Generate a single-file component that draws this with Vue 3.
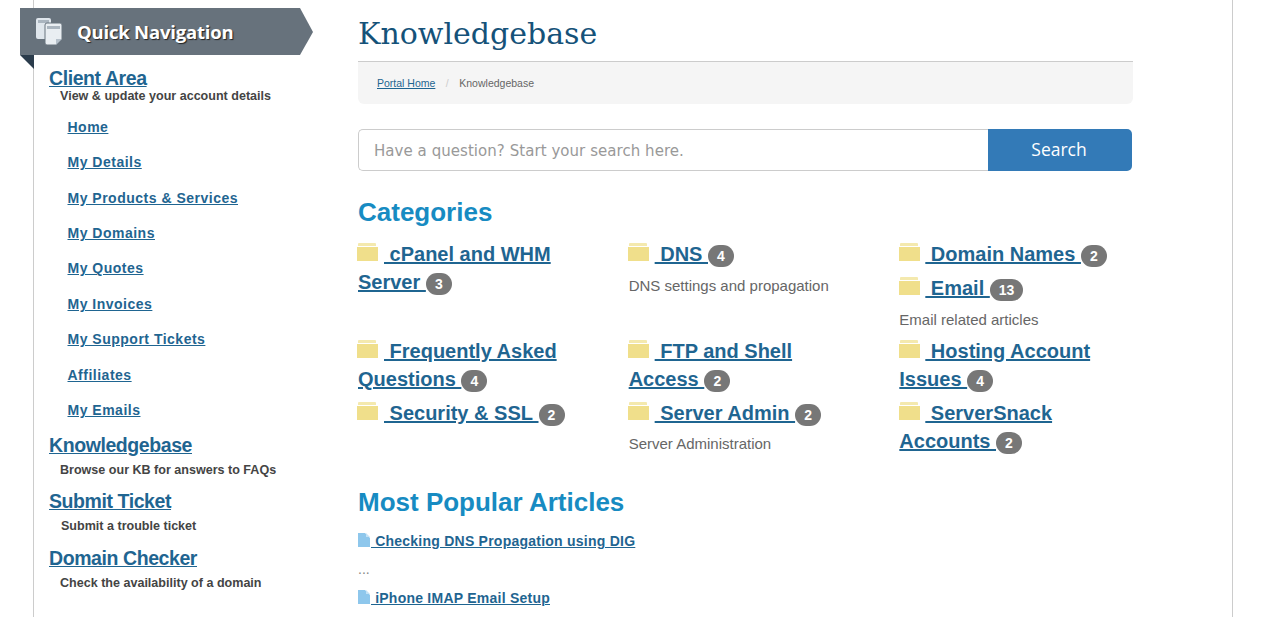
<script setup>
const nav = ['Home','My Details','My Products & Services','My Domains','My Quotes','My Invoices','My Support Tickets','Affiliates','My Emails']
const rows = [
  [
    [{ t: 'cPanel and WHM Server', n: 3 }],
    [{ t: 'DNS', n: 4, d: 'DNS settings and propagation' }],
    [{ t: 'Domain Names', n: 2 }, { t: 'Email', n: 13, d: 'Email related articles' }]
  ],
  [
    [{ t: 'Frequently Asked Questions', n: 4 }],
    [{ t: 'FTP and Shell Access', n: 2 }],
    [{ t: 'Hosting Account Issues', n: 4 }]
  ],
  [
    [{ t: 'Security & SSL', n: 2 }],
    [{ t: 'Server Admin', n: 2, d: 'Server Administration' }],
    [{ t: 'ServerSnack Accounts', n: 2 }]
  ]
]
</script>

<template>
  <div class="page">
    <div class="shell">
      <aside class="side">
        <div class="ribbon">
          <svg class="ribbon-icon" viewBox="0 0 28 29" width="28" height="29">
            <rect x="1" y="1" width="15" height="21" rx="2" fill="#dfe6ec"/>
            <rect x="3" y="3" width="11" height="3" fill="#aab5bf"/>
            <path d="M12 6h13a2 2 0 0 1 2 2v14l-6 6h-9a2 2 0 0 1-2-2V8a2 2 0 0 1 2-2z" fill="#e9eef2" stroke="#69747e" stroke-width="1"/>
            <path d="M21 28v-6h6z" fill="#b5c0ca"/>
            <rect x="12" y="9" width="13" height="3" fill="#aab5bf"/>
          </svg>
          <span class="ribbon-text">Quick Navigation</span>
        </div>
        <div class="nav">
          <a class="major first">Client Area</a>
          <p class="sub sub-first">View &amp; update your account details</p>
          <ul class="list">
            <li v-for="n in nav" :key="n"><a class="minor">{{ n }}</a></li>
          </ul>
          <a class="major">Knowledgebase</a>
          <p class="sub">Browse our KB for answers to FAQs</p>
          <a class="major">Submit Ticket</a>
          <p class="sub sub-alt">Submit a trouble ticket</p>
          <a class="major">Domain Checker</a>
          <p class="sub">Check the availability of a domain</p>
        </div>
      </aside>
      <main class="main">
        <h1 class="title">Knowledgebase</h1>
        <div class="crumbs">
          <a class="crumb-link">Portal Home</a>
          <span class="crumb-sep">/</span>
          <span class="crumb-cur">Knowledgebase</span>
        </div>
        <div class="search">
          <input class="search-input" placeholder="Have a question? Start your search here." />
          <button class="search-btn">Search</button>
        </div>
        <h2 class="heading">Categories</h2>
        <div v-for="(row, i) in rows" :key="i" class="row" :class="'row-' + i">
          <div v-for="(col, j) in row" :key="j" class="col">
            <div v-for="item in col" :key="item.t" class="item">
              <div class="item-title">
                <a class="cat-link"><svg class="folder" viewBox="0 0 21 18" width="21" height="18"><path d="M2 0h16a1 1 0 0 1 1 1v2H1V1a1 1 0 0 1 1-1z" fill="#f0df8b" opacity=".7"/><rect y="4" width="21" height="14" fill="#f0df8b"/></svg>&nbsp;{{ item.t }}&nbsp;</a><span class="badge">{{ item.n }}</span>
              </div>
              <p v-if="item.d" class="desc">{{ item.d }}</p>
            </div>
          </div>
        </div>
        <h2 class="heading popular">Most Popular Articles</h2>
        <div class="article article-first">
          <a class="art-link"><svg class="doc" viewBox="0 0 12 14" width="12" height="14"><path d="M0 0h7l5 5v9H0z" fill="#8ec7ec"/><path d="M8 0l4 4H8z" fill="#c4e2f5"/></svg>&nbsp;Checking DNS Propagation using DIG</a>
        </div>
        <p class="dots">...</p>
        <div class="article">
          <a class="art-link"><svg class="doc" viewBox="0 0 12 14" width="12" height="14"><path d="M0 0h7l5 5v9H0z" fill="#8ec7ec"/><path d="M8 0l4 4H8z" fill="#c4e2f5"/></svg>&nbsp;iPhone IMAP Email Setup</a>
        </div>
      </main>
    </div>
  </div>
</template>

<style>
html, body { margin: 0; background: #fff; overflow: hidden; }
</style>

<style scoped>
.page { height: 617px; overflow: hidden; background: #fff; font-family: "Liberation Sans", Arial, sans-serif; }
.shell {
  box-sizing: border-box; width: 1200px; height: 617px; margin-left: 33px;
  border-left: 1px solid #ccc; border-right: 1px solid #ccc;
  display: flex;
}
.side { position: relative; width: 324px; flex: none; padding-top: 8px; box-sizing: border-box; }
.ribbon {
  position: relative; margin-left: -14px; width: 293px; height: 47px;
  background: #67727c;
  clip-path: polygon(0 0, 280px 0, 293px 24px, 280px 47px, 0 47px);
  display: flex; align-items: center;
}
.side::before {
  content: ""; position: absolute; left: -14px; top: 55px;
  border-style: solid; border-width: 0 14px 14px 0;
  border-color: transparent #2b3c4c transparent transparent;
}
.ribbon-icon { margin-left: 15px; flex: none; }
.ribbon-text {
  margin-left: 14px; color: #fff; font-size: 18.5px; font-weight: 700;
  font-family: "Open Sans", sans-serif; text-shadow: 1px 1px 1px #222;
  letter-spacing: -0.2px;
}
.nav { padding: 12px 0 0 15px; }
.major {
  display: block; width: max-content; color: #1f6591; font-size: 19.5px; font-weight: 700;
  line-height: 34px; text-decoration: underline; letter-spacing: -.42px;
}
.first { line-height: 22px; }
.sub { margin: 1px 0 6.5px 11px; font-size: 12.55px; font-weight: 700; line-height: 15px; color: #444; }
.sub-first { margin: 0 0 5px 11px; }
.sub-alt { margin-left: 12px; }
.list { list-style: none; margin: 0 0 0 18.5px; padding: 0; }
.list li { height: 35.45px; display: flex; align-items: center; }
.minor { color: #1f6591; font-size: 14px; font-weight: 700; text-decoration: underline; letter-spacing: .5px; }
.main { width: 775px; flex: none; }
.title {
  margin: 14px 0 0; font-family: "DejaVu Serif", serif; font-weight: 400; font-size: 30px;
  line-height: 39px; color: #155279;
}
.crumbs {
  box-sizing: border-box; height: 43px; margin-top: 8px; padding: 0 19px; background: #f5f5f5;
  border-top: 1px solid #ccc; border-radius: 0 0 6px 6px;
  display: flex; align-items: center; font-size: 10.5px;
}
.crumb-link { color: #1f6591; text-decoration: underline; }
.crumb-sep { color: #ccc; margin: 0 10.5px; }
.crumb-cur { color: #666; }
.search { display: flex; margin-top: 25px; width: 774px; height: 42px; }
.search-input {
  box-sizing: border-box; width: 630px; height: 42px; padding: 2px 15px 0; border: 1px solid #ccc; border-right: 0;
  border-radius: 5px 0 0 5px; font-family: "DejaVu Sans", sans-serif; font-size: 15px; letter-spacing: .05px; outline: none;
}
.search-input::placeholder { color: #999; opacity: 1; }
.search-btn {
  width: 144px; height: 42px; padding: 0 2px 2px 0; border: 0; background: #337ab7; color: #fff;
  border-radius: 0 5px 5px 0; font-family: "Open Sans", sans-serif; font-size: 17.5px;
}
.heading { margin: 25px 0 0; color: #178bc2; font-size: 26px; font-weight: 700; line-height: 32px; }
.row { display: grid; grid-template-columns: repeat(3, 270.67px); }
.row-0 { margin-top: 12px; height: 97px; }
.row-1 { height: 62px; }
.col { padding-right: 62px; box-sizing: border-box; min-width: 0; }
.item { margin-bottom: 6px; }
.item-title { font-size: 20px; font-weight: 700; line-height: 28px; }
.cat-link { color: #1f6591; text-decoration: underline; }
.folder { vertical-align: 0; margin-left: -.6px; margin-right: 5.6px; }
.badge {
  display: inline-block; min-width: 8px; padding: 3px 9px; border-radius: 12px; background: #777;
  color: #fff; font-size: 14px; line-height: 16px; text-align: center; vertical-align: 0;
}
.desc { margin: 8px 0 0; font-size: 15px; line-height: 20px; color: #666; }
.row-2 .desc { margin-top: 7px; }
.popular { margin-top: 25px; }
.article { line-height: 20px; font-size: 14px; }
.article-first { margin-top: 13px; }
.art-link { color: #1f6591; font-weight: 700; text-decoration: underline; letter-spacing: .24px; }
.doc { vertical-align: -1px; margin-right: 1px; }
.dots { margin: 8px 0 9px; font-size: 14px; line-height: 20px; color: #888; }
</style>
